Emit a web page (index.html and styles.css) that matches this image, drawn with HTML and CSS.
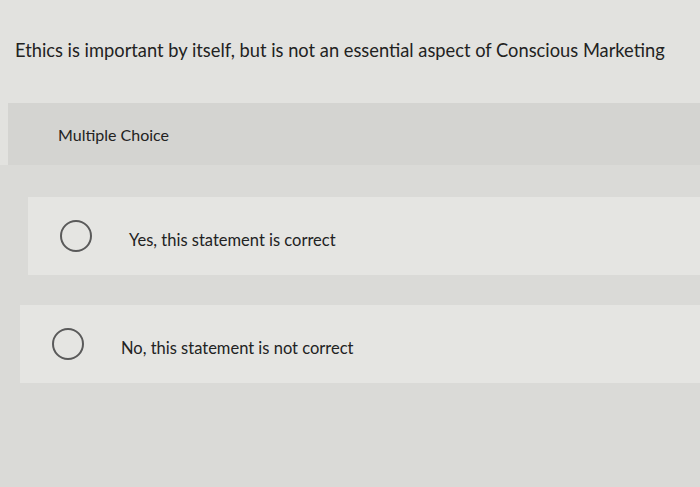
FILE: index.html
```html
<!DOCTYPE html>
<html lang="en">
<head>
    <meta charset="UTF-8">
    <title>Multiple Choice</title>
    <link rel="stylesheet" href="styles.css">
</head>
<body>
    <div class="question">
        <p class="prompt">Ethics is important by itself, but is not an essential aspect of Conscious Marketing</p>
    </div>
    <div class="type-band">Multiple Choice</div>
    <div class="choices">
        <label class="choice choice-first">
            <span class="radio"></span>
            <span class="choice-text">Yes, this statement is correct</span>
        </label>
        <label class="choice choice-second">
            <span class="radio"></span>
            <span class="choice-text">No, this statement is not correct</span>
        </label>
    </div>
</body>
</html>
```

FILE: styles.css
```css
body {
    margin: 0;
    background-color: #e2e2df;
    font-family: Lato, "Open Sans", Arial, sans-serif;
    color: #222;
}

.question {
    height: 103px;
    padding-left: 15px;
    box-sizing: border-box;
    padding-top: 37px;
}

.prompt {
    margin: 0;
    font-size: 18.3px;
    line-height: 26px;
}

.type-band {
    margin-left: 8px;
    height: 62px;
    padding-left: 50px;
    display: flex;
    align-items: center;
    background-color: #d4d4d1;
    font-size: 16px;
}

.choices {
    display: flex;
    flex-direction: column;
    gap: 30px;
    padding-top: 32px;
    height: 322px;
    box-sizing: border-box;
    background-color: #dadad7;
}

.choice {
    display: flex;
    align-items: center;
    height: 78px;
    padding-left: 32px;
    background-color: #e5e5e2;
    font-size: 16.5px;
}

.choice-first {
    margin-left: 28px;
}

.choice-second {
    margin-left: 20px;
}

.choice-text {
    padding-top: 8px;
}

.radio {
    width: 28px;
    height: 28px;
    border: 2px solid #5a5a5a;
    border-radius: 50%;
    margin-right: 37px;
}
```
